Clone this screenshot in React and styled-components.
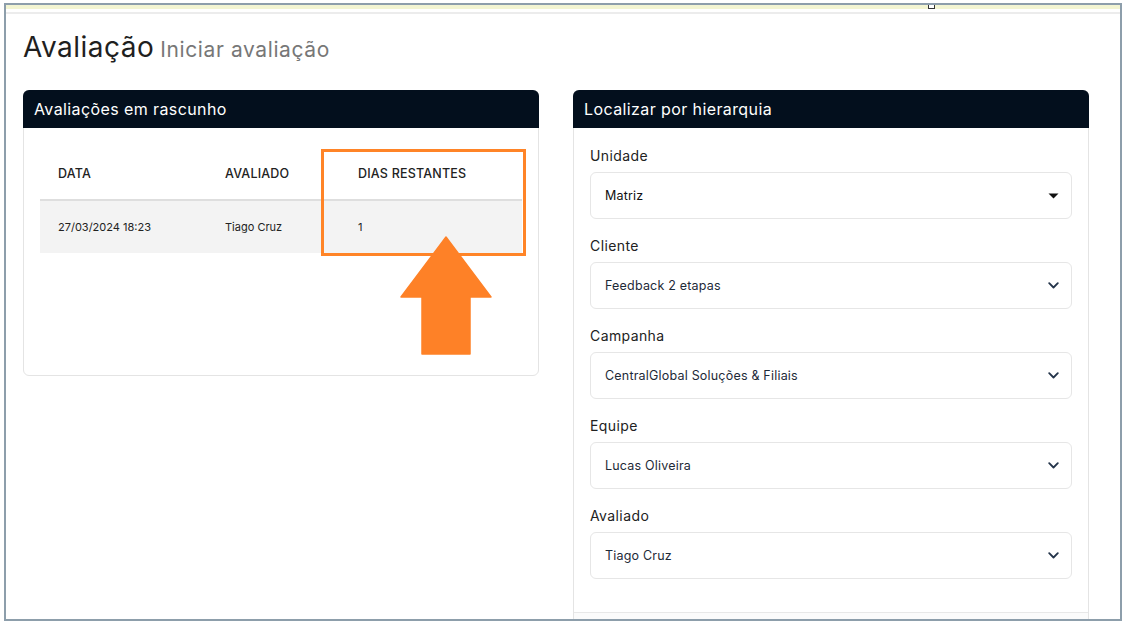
import React from "react";
import styled, { createGlobalStyle } from "styled-components";

const GlobalStyle = createGlobalStyle`
  html, body {
    margin: 0;
    padding: 0;
    background: #ffffff;
    font-family: "Inter", "Open Sans", sans-serif;
  }
`;

const Frame = styled.div`
  position: relative;
  box-sizing: border-box;
  margin: 3px 0 0 4px;
  width: 1118px;
  height: 618px;
  border: 2px solid #8d9eab;
  overflow: hidden;
  background: #fff;
`;

const TopBand = styled.div`
  height: 4px;
  background: #f3f5d2;
  border-bottom: 3px solid #ffffff;
  box-shadow: 0 2px 0 #ececec;
  margin-bottom: 2px;
`;

const Handle = styled.div`
  position: absolute;
  top: -1px;
  left: 922px;
  width: 5px;
  height: 3px;
  background: #fff;
  border: 1px solid #333;
`;

const Content = styled.div`
  padding: 16px 30px 0 17px;
`;

const TitleRow = styled.h1`
  margin: 0 0 23px;
  display: flex;
  align-items: baseline;
  gap: 6px;
  font-weight: 400;
  font-size: 28px;
  line-height: 34px;
  color: #1f1f1f;
  letter-spacing: 0.5px;
`;

const SubTitle = styled.span`
  font-size: 21px;
  color: #777;
  letter-spacing: 0.6px;
`;

const Columns = styled.div`
  display: flex;
  gap: 34px;
  align-items: flex-start;
`;

const Card = styled.div`
  position: relative;
  box-sizing: border-box;
  width: 516px;
  border: 1px solid #e4e4e4;
  border-radius: 6px;
  background: #fff;
`;

const CardHeader = styled.div`
  height: 38px;
  display: flex;
  align-items: center;
  padding: 0 11px;
  margin: -1px -1px 0;
  background: #030f1d;
  color: #fff;
  font-size: 16px;
  letter-spacing: 0.4px;
  border-radius: 6px 6px 0 0;
`;

const TableBody = styled.div`
  padding: 20px 16px 0;
  min-height: 227px;
`;

const Table = styled.table`
  width: 100%;
  table-layout: fixed;
  border-collapse: collapse;
`;

const Th = styled.th`
  box-sizing: border-box;
  width: ${p => (p.w ? `${p.w}px` : "auto")};
  text-align: left;
  font-weight: 500;
  font-size: 12.5px;
  letter-spacing: 0.2px;
  color: #222;
  padding: 0 0 0 18px;
  height: 52px;
  border-bottom: 2px solid #dedede;
`;

const Td = styled.td`
  padding: 0 0 0 18px;
  height: 52px;
  font-size: 11px;
  color: #222;
  background: #f3f3f3;
`;

const Highlight = styled.div`
  position: absolute;
  left: 297px;
  top: 58px;
  width: 205px;
  height: 107px;
  box-sizing: border-box;
  border: 3px solid #ff8427;
`;

const Arrow = styled.svg`
  position: absolute;
  left: 376px;
  top: 145px;
`;

const FormBody = styled.div`
  padding: 18px 16px 33px;
  display: flex;
  flex-direction: column;
  gap: 17px;
`;

const Field = styled.div`
  display: flex;
  flex-direction: column;
  gap: 6px;
`;

const Label = styled.label`
  font-size: 14px;
  line-height: 20px;
  letter-spacing: 0.4px;
  color: #222;
`;

const Select = styled.div`
  box-sizing: border-box;
  height: 47px;
  display: flex;
  align-items: center;
  justify-content: space-between;
  padding: 0 12px 0 14px;
  border: 1px solid #e6e6e6;
  border-radius: 6px;
  font-size: 12.5px;
  letter-spacing: 0.2px;
  color: ${p => (p.dark ? "#111" : "#1e2a38")};
`;

const CardFooter = styled.div`
  height: 20px;
  border-top: 1px solid #e8e8e8;
  background: #fbfbfb;
`;

const Caret = () => (
  <svg width="11" height="6" viewBox="0 0 11 6">
    <path d="M0.5 0.5 H10.5 L5.5 5.5 Z" fill="#111" />
  </svg>
);

const Chevron = () => (
  <svg width="11" height="7" viewBox="0 0 11 7">
    <path
      d="M1.2 1.2 L5.5 5.5 L9.8 1.2"
      fill="none"
      stroke="#24344a"
      strokeWidth="1.8"
      strokeLinecap="round"
      strokeLinejoin="round"
    />
  </svg>
);

const fields = [
  { label: "Unidade", value: "Matriz", caret: true },
  { label: "Cliente", value: "Feedback 2 etapas" },
  { label: "Campanha", value: "CentralGlobal Soluções & Filiais" },
  { label: "Equipe", value: "Lucas Oliveira" },
  { label: "Avaliado", value: "Tiago Cruz" }
];

const App = () => {
  return (
    <>
      <GlobalStyle />
      <Frame>
        <TopBand />
        <Handle />
        <Content>
          <TitleRow>
            Avaliação <SubTitle>Iniciar avaliação</SubTitle>
          </TitleRow>
          <Columns>
            <Card>
              <CardHeader>Avaliações em rascunho</CardHeader>
              <TableBody>
                <Table>
                  <thead>
                    <tr>
                      <Th w={167}>DATA</Th>
                      <Th w={133}>AVALIADO</Th>
                      <Th>DIAS RESTANTES</Th>
                    </tr>
                  </thead>
                  <tbody>
                    <tr>
                      <Td>27/03/2024 18:23</Td>
                      <Td>Tiago Cruz</Td>
                      <Td>1</Td>
                    </tr>
                  </tbody>
                </Table>
              </TableBody>
              <Highlight />
              <Arrow width="92" height="119" viewBox="0 0 92 119">
                <path
                  d="M46 1 L91 61 H70 V118 H22 V61 H1 Z"
                  fill="#fe8127"
                  stroke="#fe8127"
                  strokeWidth="1.5"
                  strokeLinejoin="round"
                />
              </Arrow>
            </Card>
            <Card>
              <CardHeader>Localizar por hierarquia</CardHeader>
              <FormBody>
                {fields.map(f => (
                  <Field key={f.label}>
                    <Label>{f.label}</Label>
                    <Select dark={f.caret}>
                      <span>{f.value}</span>
                      {f.caret ? <Caret /> : <Chevron />}
                    </Select>
                  </Field>
                ))}
              </FormBody>
              <CardFooter />
            </Card>
          </Columns>
        </Content>
      </Frame>
    </>
  );
};

export default App;
